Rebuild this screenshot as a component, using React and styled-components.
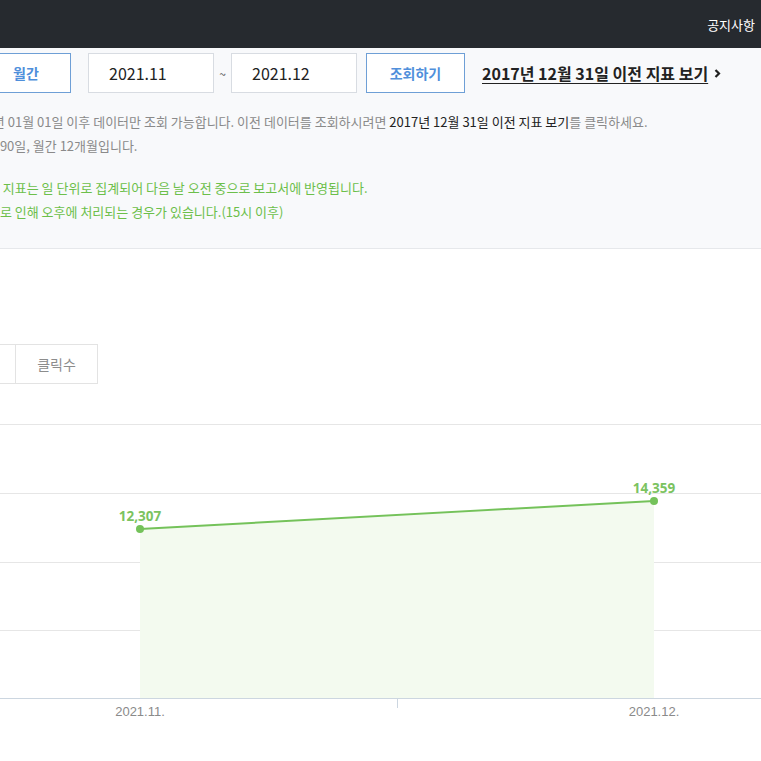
import React from 'react';
import styled, { createGlobalStyle } from 'styled-components';

const GlobalStyle = createGlobalStyle`
  html, body {
    margin: 0;
    padding: 0;
    background: #fff;
    font-family: "Noto Sans CJK KR", "Noto Sans", sans-serif;
    color: #222;
  }
`;

const Viewport = styled.div`
  width: 761px;
  overflow: hidden;
`;

const TopBar = styled.div`
  height: 48px;
  background: #262a2f;
  display: flex;
  align-items: center;
  justify-content: flex-end;
  padding-right: 6px;
`;

const TopLink = styled.a`
  color: #fff;
  font-size: 13px;
  text-decoration: none;
`;

const SearchArea = styled.section`
  background: #f8f9fb;
  border-bottom: 1px solid #e6e8eb;
  padding: 5px 0 24px;
`;

// the screenshot is a crop of a wider page, so the content starts left of the window
const Shifted = styled.div`
  margin-left: -140px;
  width: 1100px;
`;

const FilterRow = styled.div`
  display: flex;
  align-items: center;
  padding-left: 121px;
  height: 40px;
`;

const OutlineButton = styled.button`
  height: 40px;
  width: ${p => p.w}px;
  border: 1px solid #6e9fd6;
  background: #fff;
  color: #4f8fdb;
  font-family: inherit;
  font-size: 14px;
  font-weight: 700;
  padding: 0;
  margin-left: ${p => p.before || 0}px;
  margin-right: ${p => p.after || 0}px;
`;

const DateInput = styled.div`
  height: 40px;
  width: 126px;
  box-sizing: border-box;
  border: 1px solid #d8dce2;
  background: #fff;
  font-size: 16px;
  color: #222;
  display: flex;
  align-items: center;
  padding-left: 20px;
`;

const Tilde = styled.span`
  width: 17px;
  text-align: center;
  font-size: 12px;
  color: #555;
`;

const PastLink = styled.a`
  font-size: 16px;
  font-weight: 700;
  color: #222;
  text-decoration: underline;
  text-underline-offset: 3px;
  display: flex;
  align-items: center;
  gap: 6px;
  margin-left: 17px;
`;

const Notes = styled.div`
  padding: 17px 0 0 19px;
  font-size: 13px;
  line-height: 24px;
  white-space: nowrap;
`;

const NoteGroup = styled.div`
  color: ${p => (p.green ? '#6cbf4a' : '#8a8a8a')};
  & + & {
    margin-top: 18px;
  }
`;

const Strong = styled.span`
  color: #222;
`;

const Body = styled.div`
  padding-top: 95px;
`;

const TabRow = styled.div`
  display: flex;
  padding-left: 74px;
`;

const Tab = styled.div`
  width: 82px;
  height: 40px;
  box-sizing: border-box;
  border: 1px solid #e3e3e3;
  & + & {
    border-left: none;
  }
  display: flex;
  align-items: center;
  justify-content: center;
  font-size: 14px;
  color: #8c8c8c;
`;

const ChartBox = styled.div`
  height: 377px;
`;

const points = [
  { x: 140, y: 145, label: '2021.11.', value: '12,307' },
  { x: 654, y: 117, label: '2021.12.', value: '14,359' },
];
const grid = [40, 109, 178, 246];
const axisY = 314;

function Chart() {
  const [a, b] = points;
  return (
    <svg width="761" height="377" viewBox="0 0 761 377">
      {grid.map(y => (
        <line key={y} x1="0" x2="761" y1={y + 0.5} y2={y + 0.5} stroke="#e6e6e6" />
      ))}
      <polygon
        points={`${a.x},${a.y} ${b.x},${b.y} ${b.x},${axisY} ${a.x},${axisY}`}
        fill="#f3faef"
      />
      <line x1="0" x2="761" y1={axisY + 0.5} y2={axisY + 0.5} stroke="#ccd6e0" />
      <line x1="397.5" x2="397.5" y1={axisY} y2={axisY + 10} stroke="#ccd6e0" />
      <line x1={a.x} y1={a.y} x2={b.x} y2={b.y} stroke="#74c25a" strokeWidth="2" />
      {points.map(p => (
        <g key={p.label}>
          <circle cx={p.x} cy={p.y} r="4" fill="#74c25a" />
          <text
            x={p.x}
            y={p.y - 8}
            textAnchor="middle"
            fontFamily="Noto Sans, sans-serif"
            fontSize="13.5"
            fontWeight="700"
            fill="#7bc35f"
          >
            {p.value}
          </text>
          <text
            x={p.x}
            y={axisY + 18}
            textAnchor="middle"
            fontFamily="Liberation Sans, sans-serif"
            fontSize="13"
            fill="#8a8a8a"
          >
            {p.label}
          </text>
        </g>
      ))}
    </svg>
  );
}

export default function App() {
  return (
    <Viewport>
      <GlobalStyle />
      <TopBar>
        <TopLink>공지사항</TopLink>
      </TopBar>
      <SearchArea>
        <Shifted>
          <FilterRow>
            <OutlineButton w={90} after={17}>월간</OutlineButton>
            <DateInput>2021.11</DateInput>
            <Tilde>~</Tilde>
            <DateInput>2021.12</DateInput>
            <OutlineButton w={99} before={9}>조회하기</OutlineButton>
            <PastLink>
              2017년 12월 31일 이전 지표 보기
              <svg width="7" height="9" viewBox="0 0 7 9">
                <path d="M1.5 1 L5 4.5 L1.5 8" stroke="#222" strokeWidth="2.2" fill="none" />
              </svg>
            </PastLink>
          </FilterRow>
          <Notes>
            <NoteGroup>
              <div>
                - 통계 데이터는 2018년 01월 01일 이후 데이터만 조회 가능합니다. 이전 데이터를 조회하시려면{' '}
                <Strong>2017년 12월 31일 이전 지표 보기</Strong>를 클릭하세요.
              </div>
              <div>- 최대조회기간은 일간 90일, 월간 12개월입니다.</div>
            </NoteGroup>
            <NoteGroup green>
              <div>- 광고 보고서내의 모든 지표는 일 단위로 집계되어 다음 날 오전 중으로 보고서에 반영됩니다.</div>
              <div>- 단 서버시스템 상황으로 인해 오후에 처리되는 경우가 있습니다.(15시 이후)</div>
            </NoteGroup>
          </Notes>
        </Shifted>
      </SearchArea>
      <Body>
        <Shifted>
          <TabRow>
            <Tab>노출수</Tab>
            <Tab>클릭수</Tab>
          </TabRow>
        </Shifted>
        <ChartBox>
          <Chart />
        </ChartBox>
      </Body>
    </Viewport>
  );
}
